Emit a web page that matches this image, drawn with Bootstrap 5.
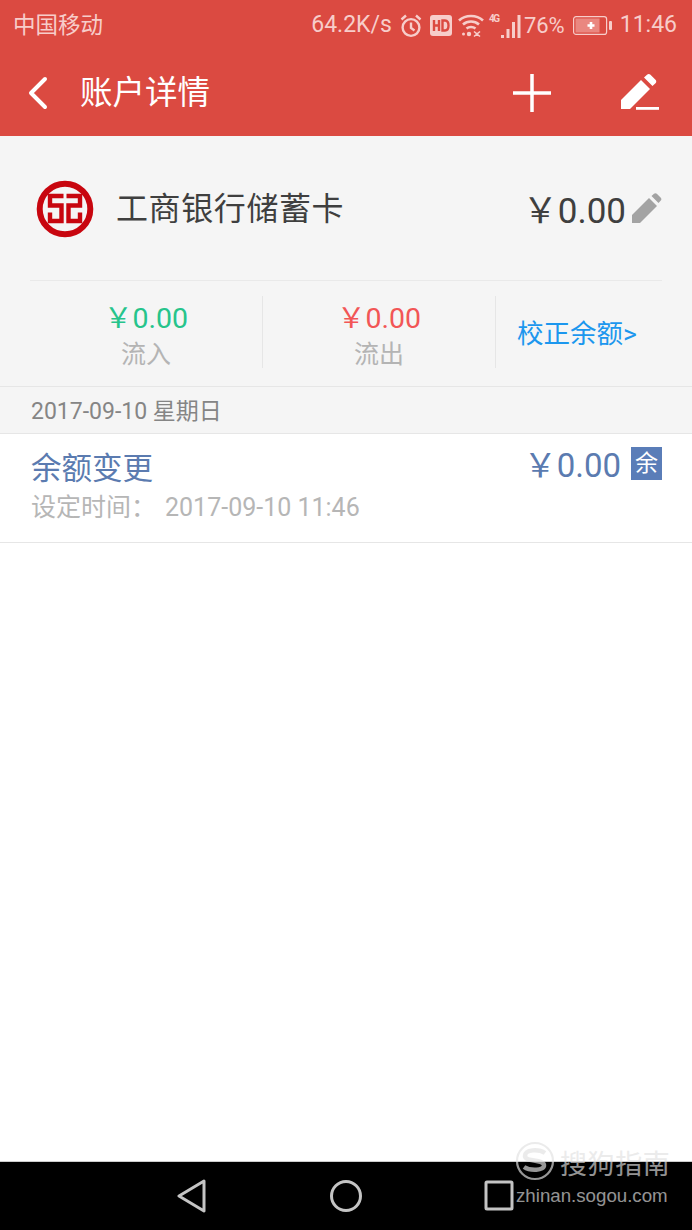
<!DOCTYPE html>
<html lang="zh-CN">
<head>
<meta charset="UTF-8">
<title>账户详情</title>
<meta name="viewport" content="width=device-width, initial-scale=1">
<link href="https://cdn.jsdelivr.net/npm/bootstrap@5.3.0/dist/css/bootstrap.min.css" rel="stylesheet">
<style>
body { font-family: Roboto, "Noto Sans CJK SC", sans-serif; background: #fff; }
.phone { width: 692px; height: 1230px; overflow: hidden; position: relative; }
.app-head { background: #db4a41; height: 136px; color: #fff; }
.status-bar { height: 48px; padding: 3px 15px 0 13px; font-size: 23px; color: #f7cdca; }
.status-cn { font-size: 22.5px; }
.pct { font-size: 22px; }
.tool-bar { height: 88px; padding: 2px 33px 0 28px; }
.tool-title { font-size: 32.5px; margin-left: 32px; line-height: 1; }
.tool-pen { margin-left: 70px; }
.summary { background: #f5f5f5; height: 251px; border-bottom: 1px solid #e6e6e6; }
.acct-row { height: 145px; margin: 0 30px; border-bottom: 1px solid #e9e9e9; padding: 2px 0 0 6px; }
.acct-name { font-size: 32px; color: #3f3f3f; margin-left: 22px; line-height: 1; letter-spacing: .6px; }
.acct-money { font-size: 35px; color: #3f3f3f; line-height: 1; }
.yen { font-family: "Noto Sans CJK SC", sans-serif; font-weight: 400; }
.stats { height: 105px; padding-top: 15px; }
.stat-cell { width: 233px; height: 72px; border-right: 1px solid #e6e6e6; text-align: center; }
.stat-cell:first-child { width: 263px; padding-left: 30px; }
.stat-val { font-size: 28.5px; line-height: 40px; }
.stat-lab { font-size: 25px; line-height: 32px; color: #b4b4b4; }
.in-col { color: #26c48b; }
.out-col { color: #f25656; }
.fix-link { font-size: 26.5px; color: #1c97ee; text-decoration: none; margin-left: 21px; line-height: 76px; height: 72px; }
.date-row { background: #f5f5f5; height: 47px; padding: 0 31px; font-size: 23px; line-height: 49px; color: #858585; border-bottom: 1px solid #e6e6e6; }
.item-row { height: 109px; padding: 13px 30px 0 31px; border-bottom: 1px solid #e6e6e6; }
.item-name { font-size: 30.5px; line-height: 44px; color: #5b7bb0; }
.item-time { font-size: 25px; line-height: 34px; color: #b6b6b6; white-space: nowrap; }
.item-time span { margin-left: 9px; }
.item-money { font-size: 33px; line-height: 1; color: #5b7bb0; }
.item-tag { width: 31px; height: 33px; background: #5a7db8; color: #fff; font-size: 23px; line-height: 33px; text-align: center; margin-left: 10px; }
.nav-keys { position: absolute; left: 0; right: 0; bottom: 0; height: 69px; background: #000; border-top: 1px solid #ccc; }
.nav-keys svg { position: absolute; }
.key-back { left: 176px; top: 17px; }
.key-home { left: 329px; top: 17px; }
.key-recent { left: 484px; top: 18px; }
.wmark { position: absolute; left: 515px; top: 1140px; width: 170px; color: rgba(225, 225, 225, .67); }
.wmark-cn { position: absolute; left: 45px; top: 9px; font-size: 27px; line-height: 32px; white-space: nowrap; letter-spacing: .6px; }
.wmark-en { position: absolute; left: 1px; top: 44px; font-size: 18.7px; line-height: 24px; font-family: "Liberation Sans", sans-serif; white-space: nowrap; }
</style>
</head>

<body>
<div class="phone">

  <div class="app-head">
    <div class="status-bar d-flex align-items-center">
      <span class="status-cn">中国移动</span>
      <span class="ms-auto">64.2K/s</span>
      <!-- alarm -->
      <svg class="ms-2" width="22" height="24" viewBox="0 0 22 24" fill="none" stroke="#f7cdca" stroke-width="2.4"><circle cx="11" cy="13.5" r="8.4"/><path d="M11 8.5v5.5l3.500 2.500M1.500 5.500 6 1.500M20.500 5.500 16 1.500"/></svg>
      <!-- hd -->
      <svg class="ms-2" width="22" height="21" viewBox="0 0 22 21"><rect width="22" height="21" rx="3" fill="#f7cdca"/><path d="M4 5v11M9 5v11M4 10.500h5M12.500 5.500v10h2.500c2.500 0 3.500-2 3.500-5s-1-5-3.500-5z" fill="none" stroke="#db4a41" stroke-width="2.400"/></svg>
      <!-- wifi -->
      <svg style="margin-left:6px" width="26" height="24" viewBox="0 0 26 24" fill="none" stroke="#f7cdca" stroke-width="2.600"><path d="M1 6.500C7.500 .5 18.500 .5 25 6.500M5 10.500c4.500-4 11.500-4 16 0M8.500 14.500c2.500-2 6.500-2 9 0"/><circle cx="11" cy="20" r="2.200" fill="#f7cdca" stroke="none"/><circle cx="5.500" cy="20" r="1.500" fill="#f7cdca" stroke="none"/><path d="M16 17.500l3 2.500-3 2.500M22 17.500l-3 2.500 3 2.500" stroke-width="1.600"/></svg>
      <!-- signal -->
      <svg class="ms-1" width="36" height="26" viewBox="0 0 36 26" fill="#f7cdca"><text x="1" y="9" font-size="10" font-weight="700" font-family="Roboto" textLength="11">4G</text><rect x="13" y="22" width="3" height="3"/><rect x="18.500" y="16" width="3" height="9"/><rect x="24" y="9" width="3" height="16"/><rect x="29.500" y="2" width="3" height="23"/></svg>
      <span class="pct">76%</span>
      <!-- battery -->
      <svg class="ms-2" width="39" height="19" viewBox="0 0 39 19"><rect x=".6" y=".6" width="33" height="17.800" rx="2.500" fill="none" stroke="#f7cdca" stroke-width="1.200"/><rect x="2.500" y="2.500" width="24" height="14" fill="#ea8780"/><path d="M14.500 9.500h7M18 6v7" stroke="#fff" stroke-width="2.600"/><rect x="36" y="5" width="3" height="9" rx="1" fill="#f7cdca"/></svg>
      <span class="ms-2">11:46</span>
    </div>
    <div class="tool-bar d-flex align-items-center">
      <svg width="20" height="34" viewBox="0 0 20 34" fill="none" stroke="#fff" stroke-width="4" stroke-linecap="round" stroke-linejoin="round"><path d="M17 3 3 17l14 14"/></svg>
      <span class="tool-title">账户详情</span>
      <svg class="ms-auto" width="38" height="38" viewBox="0 0 38 38" stroke="#fff" stroke-width="3.500"><path d="M19 0v38M0 19h38"/></svg>
      <svg class="tool-pen" width="38" height="38" viewBox="0 0 38 38" fill="#fff"><path d="M0 35V26L20 6l9 9L9 35z"/><path d="M23 3.500 26 .8c1-1 2.500-1 3.500 0l5 5c1 1 1 2.500 0 3.500l-3 2.700z"/><rect x="15" y="33" width="23" height="2.800"/></svg>
    </div>
  </div>

  <div class="summary">
    <div class="acct-row d-flex align-items-center">
      <svg width="58" height="58" viewBox="0 0 58 58" fill="none" stroke="#c8060f">
        <circle cx="29" cy="29" r="25.300" stroke-width="6"/>
        <path d="M27.500 16H14V25.500H25.500V41H14V32.500M30.500 16H44V25.500H32.500V41H44V32.500" stroke-width="4.400"/>
      </svg>
      <span class="acct-name">工商银行储蓄卡</span>
      <span class="acct-money ms-auto"><span class="yen">&#xFFE5;</span>0.00</span>
      <svg class="ms-1" width="32" height="32" viewBox="0 0 32 32" fill="#a3a3a3"><path d="M2 30v-8L19 5l8 8L10 30z"/><path d="M21.500 3 24 .8c.8-.8 2-.8 2.800 0l4 4c.8.800.8 2 0 2.800L28.500 10z"/></svg>
    </div>
    <div class="stats d-flex">
      <div class="stat-cell">
        <div class="stat-val in-col"><span class="yen">&#xFFE5;</span>0.00</div>
        <div class="stat-lab">流入</div>
      </div>
      <div class="stat-cell">
        <div class="stat-val out-col"><span class="yen">&#xFFE5;</span>0.00</div>
        <div class="stat-lab">流出</div>
      </div>
      <a class="fix-link" href="#">校正余额&gt;</a>
    </div>
  </div>

  <div class="date-row">2017-09-10 星期日</div>

  <div class="item-row d-flex justify-content-between">
    <div>
      <div class="item-name">余额变更</div>
      <div class="item-time">设定时间：<span>2017-09-10 11:46</span></div>
    </div>
    <div class="d-flex align-items-start">
      <span class="item-money"><span class="yen">&#xFFE5;</span>0.00</span>
      <span class="item-tag">余</span>
    </div>
  </div>

  <div class="nav-keys">
    <svg class="key-back" width="32" height="34" viewBox="0 0 32 34" fill="none" stroke="#c4c4c4" stroke-width="3" stroke-linejoin="round"><path d="M28 2 3 17l25 15z"/></svg>
    <svg class="key-home" width="34" height="34" viewBox="0 0 34 34" fill="none" stroke="#c4c4c4" stroke-width="3"><circle cx="17" cy="17" r="14.500"/></svg>
    <svg class="key-recent" width="32" height="32" viewBox="0 0 32 32" fill="none" stroke="#c4c4c4" stroke-width="3" stroke-linejoin="round"><rect x="2" y="2" width="26" height="27" rx="1"/></svg>
  </div>

  <div class="wmark">
    <svg width="42" height="44" viewBox="0 0 42 44" fill="none" stroke="rgba(225,225,225,.67)"><circle cx="20" cy="21" r="18" stroke-width="2.200"/><path d="M30 13C24 9 10 9 10 16c0 6 18 3 19 9 .5 6-14 6-20 2" stroke-width="4.500"/></svg>
    <span class="wmark-cn">搜狗指南</span>
    <span class="wmark-en">zhinan.sogou.com</span>
  </div>

</div>
<script src="https://cdn.jsdelivr.net/npm/bootstrap@5.3.0/dist/js/bootstrap.bundle.min.js"></script>
</body>
</html>
